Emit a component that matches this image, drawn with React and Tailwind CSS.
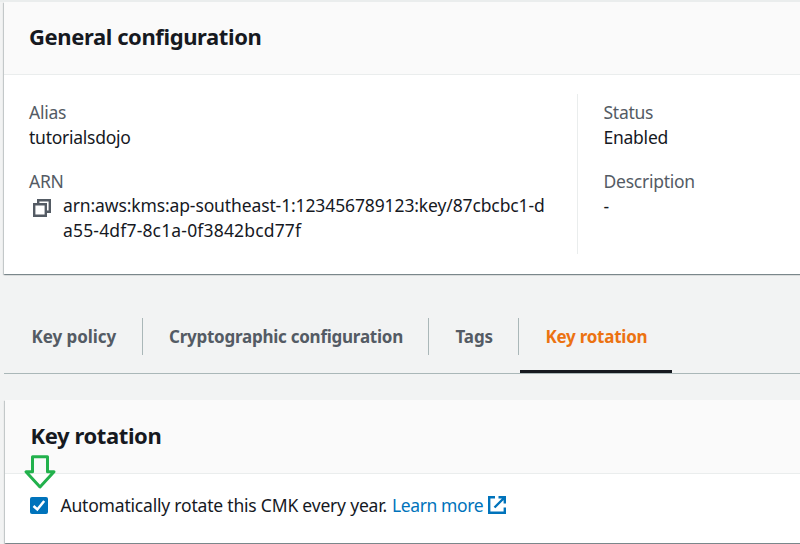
import React from "react";

function Field({ label, children }) {
  return (
    <div>
      <div className="tracking-[-0.25px] text-[#545b64]">{label}</div>
      {children}
    </div>
  );
}

function CopyIcon() {
  return (
    <svg className="mt-[5px] ml-1 h-[18px] w-[18px] shrink-0" viewBox="0 0 18 18" fill="none" stroke="#545b64" strokeWidth="2.4">
      <path d="M1.2 5.2h11.6v11.6H1.2z" />
      <path d="M5.2 5.2V1.2h11.6v11.6h-4" />
    </svg>
  );
}

function ExternalIcon() {
  return (
    <svg className="ml-[4px] h-[18px] w-[18px] shrink-0" viewBox="0 0 18 18" fill="none" stroke="#0073bb" strokeWidth="2.4">
      <path d="M7 1.2H1.2v15.6h15.6v-5.3" />
      <path d="M10.5 1.2h6.3v6.3M16.5 1.5L6.5 11.5" />
    </svg>
  );
}

function Tab({ children, className }) {
  return (
    <div className={`flex h-[37px] items-center pb-px font-bold whitespace-nowrap ${className}`}>{children}</div>
  );
}

export default function App() {
  return (
    <div className="relative h-[544px] w-[800px] overflow-hidden bg-[#f2f3f3] font-['Noto_Sans',sans-serif] text-[17.5px] leading-[25px] text-[#16191f]">
      <div className="h-[2px] bg-[#eaeded]" />
      <section className="ml-[4px] h-[272px] w-[820px] bg-white shadow-[0_1px_1px_0_rgba(0,28,36,0.3),1px_1px_1px_0_rgba(0,28,36,0.15),-1px_1px_1px_0_rgba(0,28,36,0.15)]">
        <header className="flex h-[73px] items-center border-b border-[#eaeded] bg-[#fafafa] pb-[4px] pl-[25px]">
          <h2 className="text-[22px] leading-[28px] font-bold tracking-[-0.4px]">General configuration</h2>
        </header>
        <div className="flex pt-[19px]">
          <div className="h-[160px] w-[574px] border-r border-[#eaeded] pt-[6px] pl-[25px]">
            <Field label="Alias">
              <div className="tracking-[-0.25px]">tutorialsdojo</div>
            </Field>
            <div className="mt-[19px]">
              <Field label="ARN">
                <div className="flex whitespace-nowrap">
                  <CopyIcon />
                  <div className="-mt-px ml-[12px]">
                    <span className="tracking-[-0.12px]">arn:aws:kms:ap-southeast-1:123456789123:key/87cbcbc1-d</span>
                    <br />
                    <span className="tracking-[0.17px]">a55-4df7-8c1a-0f3842bcd77f</span>
                  </div>
                </div>
              </Field>
            </div>
          </div>
          <div className="pt-[6px] pl-[25.5px]">
            <Field label="Status">
              <div className="tracking-[-0.25px]">Enabled</div>
            </Field>
            <div className="mt-[19px]">
              <Field label="Description">
                <div>-</div>
              </Field>
            </div>
          </div>
        </div>
      </section>

      <nav className="mt-[44px] ml-[4px] flex h-[56px] border-b border-[#aab7b8] text-[17px] text-[#545b64]">
        <Tab className="w-[139px] border-r border-[#aab7b8] pl-[27.5px] tracking-[-0.05px]">Key policy</Tab>
        <Tab className="w-[286px] border-r border-[#aab7b8] pl-[26px] tracking-[-0.25px]">Cryptographic configuration</Tab>
        <Tab className="w-[90px] border-r border-[#aab7b8] pl-[26.5px] tracking-[-0.1px]">Tags</Tab>
        <div className="ml-px h-[55px] w-[152px] border-b-3 border-[#16191f] text-[#ec7211]">
          <Tab className="pl-[25.5px] tracking-[-0.25px]">Key rotation</Tab>
        </div>
      </nav>

      <section className="mt-[26px] ml-[5px] h-[143px] w-[820px] bg-white shadow-[0_1px_1px_0_rgba(0,28,36,0.3),1px_1px_1px_0_rgba(0,28,36,0.15),-1px_1px_1px_0_rgba(0,28,36,0.15)]">
        <header className="flex h-[74px] items-center border-b border-[#eaeded] bg-[#fafafa] pb-[3px] pl-[25.5px]">
          <h2 className="text-[22px] leading-[28px] font-bold tracking-[-0.4px]">Key rotation</h2>
        </header>
        <div className="flex pt-[18px] pl-[25px] whitespace-nowrap">
          <span className="mt-[5px] flex h-[17px] w-[18px] items-center justify-center rounded-[2px] bg-[#0073bb]">
            <svg className="h-[17px] w-[18px]" viewBox="0 0 18 17" fill="none" stroke="#fff" strokeWidth="2.5">
              <path d="M3.5 9L7.3 12.5L14.2 4" />
            </svg>
          </span>
          <span className="mt-px ml-[12.5px] w-[331.5px] tracking-[-0.2px]">Automatically rotate this CMK every year.</span>
          <a className="mt-px w-[91.5px] tracking-[-0.4px] text-[#0073bb]">Learn more</a>
          <div className="mt-[4px]">
            <ExternalIcon />
          </div>
        </div>
      </section>

      <svg className="absolute top-[454px] left-[23px] h-[36px] w-[34px]" viewBox="0 0 34 36" fill="none" stroke="#22b14c" strokeWidth="3" strokeLinejoin="round">
        <path d="M9.5 2.7H24.5V17.8H31L17 33L3 17.8H9.5z" />
      </svg>
    </div>
  );
}
